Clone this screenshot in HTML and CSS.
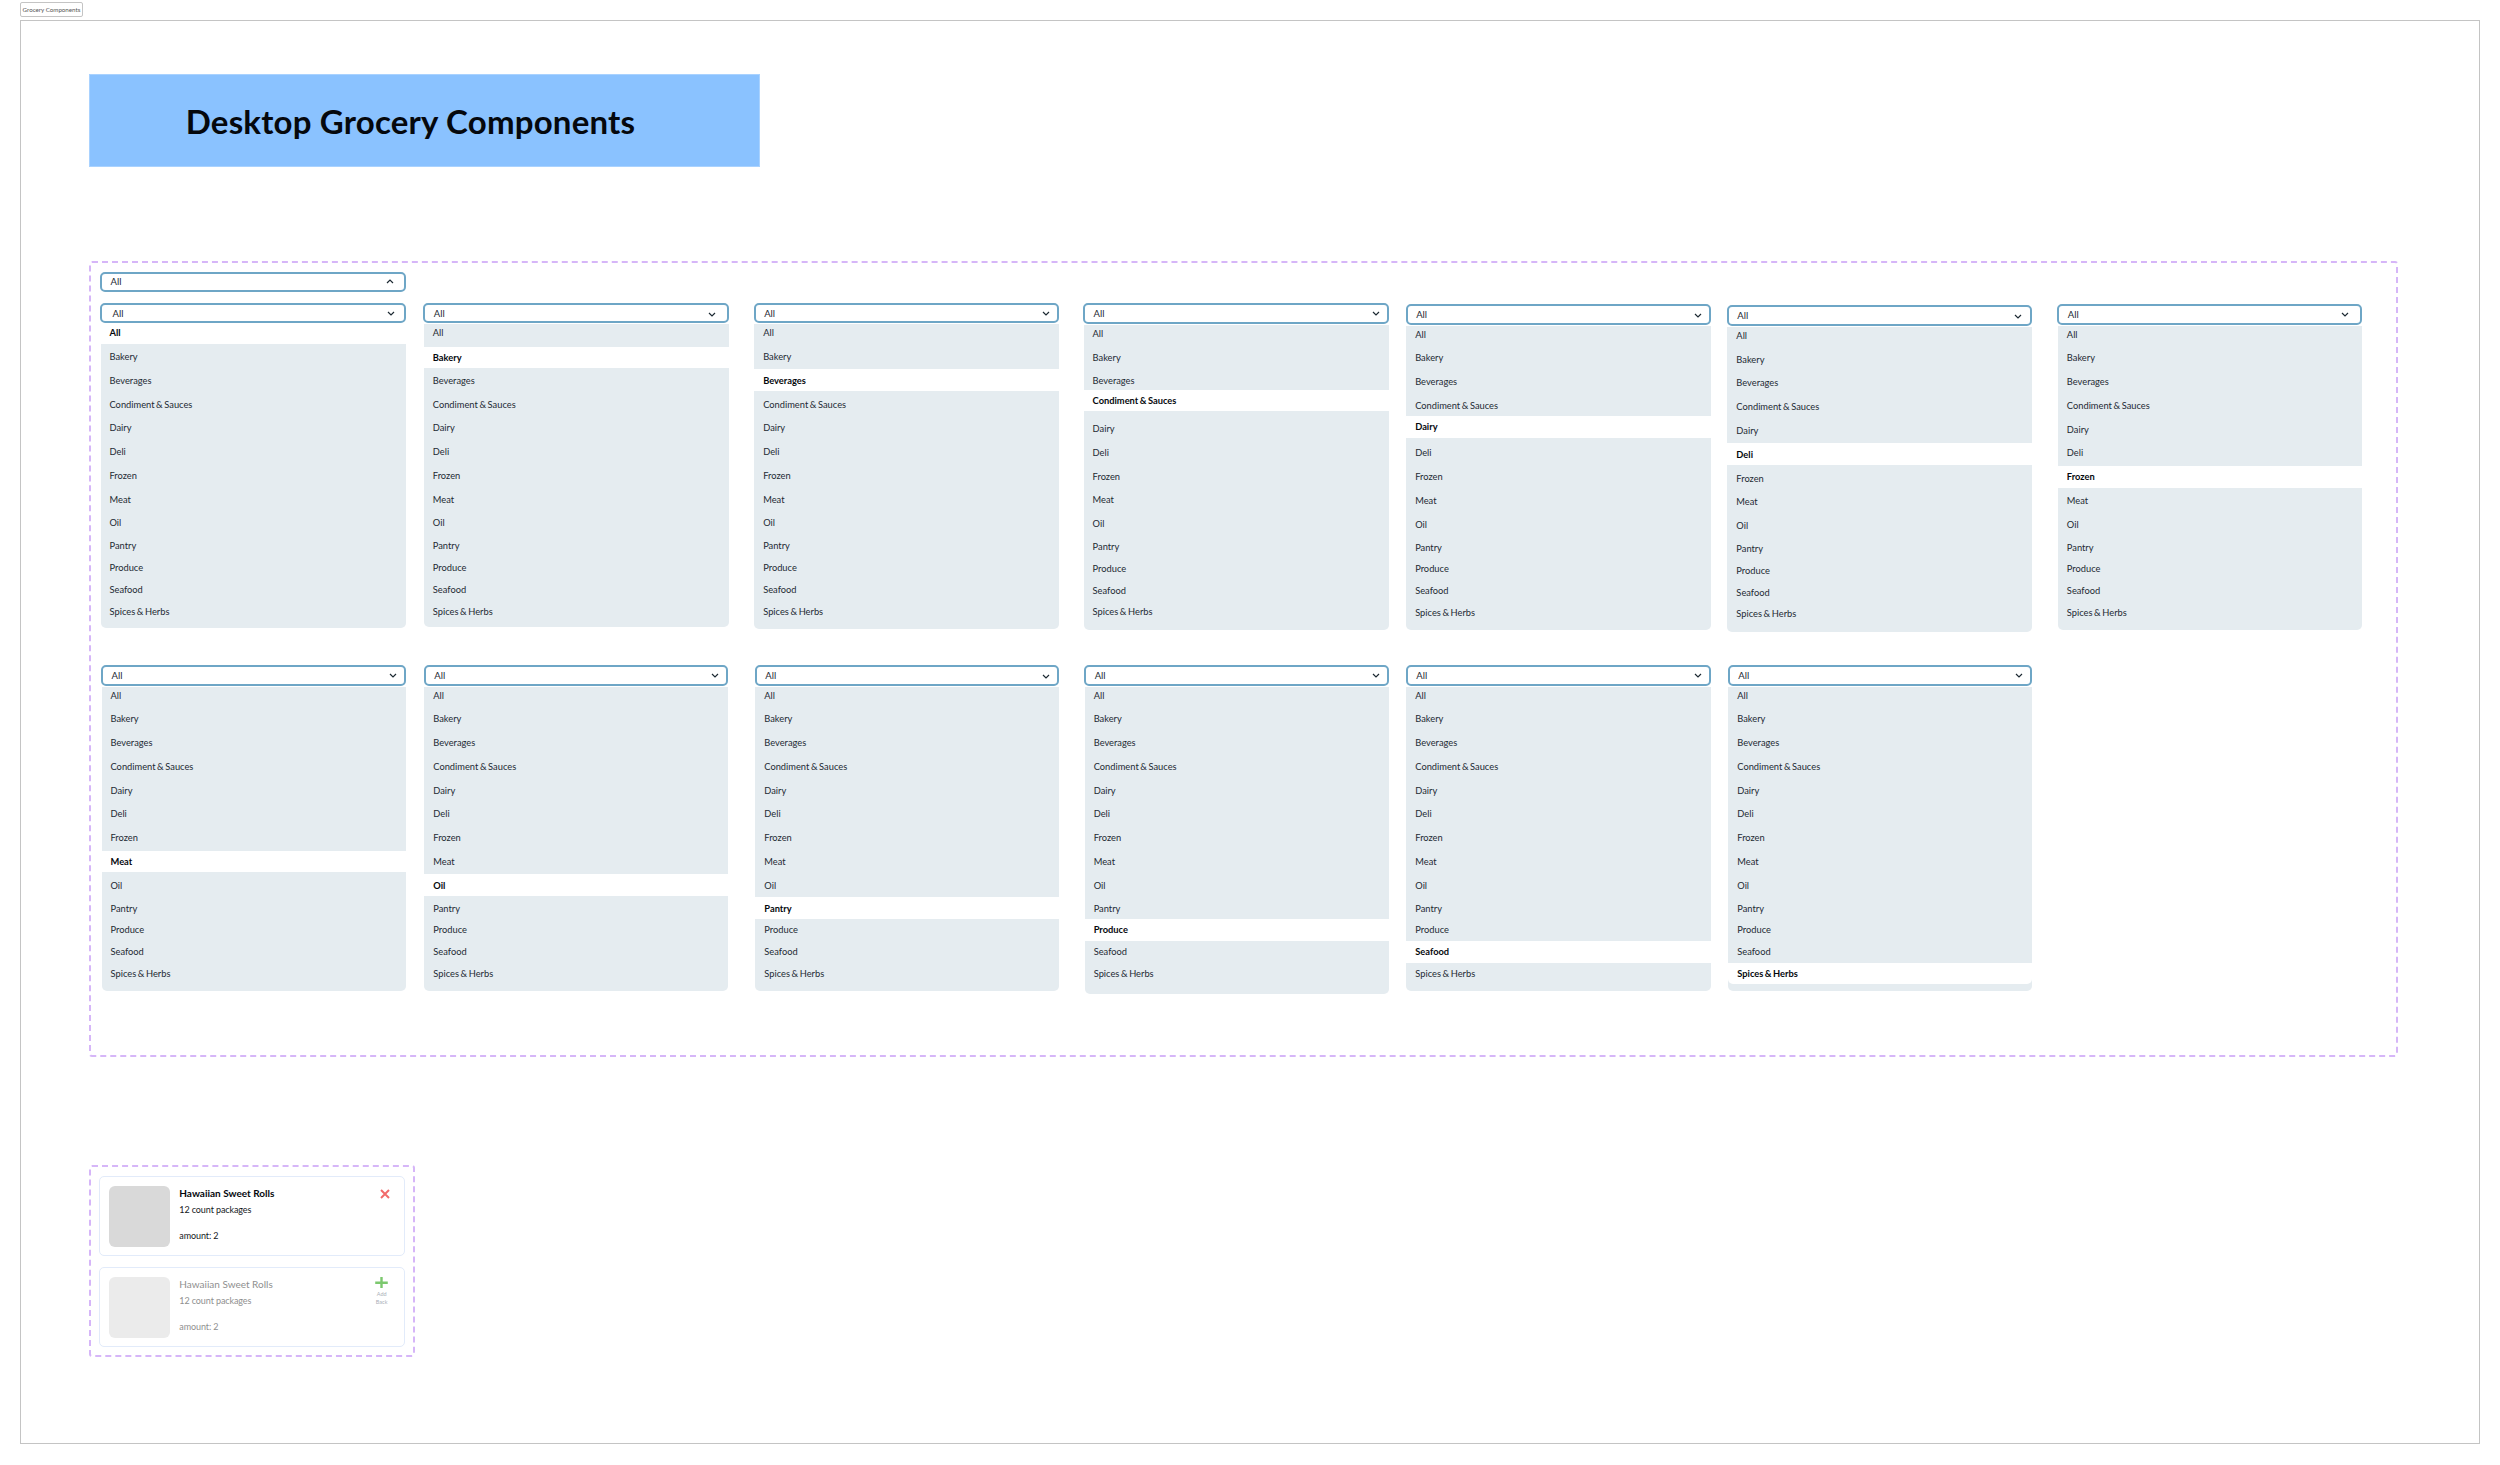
FILE: index.html
```html
<!DOCTYPE html>
<html lang="en">
<head>
  <meta charset="UTF-8" />
  <title>Grocery Components</title>
  <link rel="stylesheet" href="styles.css">
</head>
<body>
  <div class="frame-tab">Grocery Components</div>

  <main class="frame">
    <header class="banner">
      <h1>Desktop Grocery Components</h1>
    </header>

    <section class="group dropdowns">
      <div class="select select-open">
        <span>All</span>
        <svg class="chevron" viewBox="0 0 8 5"><path d="M1 4 L4 1 L7 4" /></svg>
      </div>

      <div class="row row-one">
        <div class="col">
          <div class="select"><span>All</span><svg class="chevron" viewBox="0 0 8 5"><path d="M1 1 L4 4 L7 1" /></svg></div>
          <ul class="list">
            <li class="on">All</li>
            <li>Bakery</li>
            <li>Beverages</li>
            <li>Condiment &amp; Sauces</li>
            <li>Dairy</li>
            <li>Deli</li>
            <li>Frozen</li>
            <li>Meat</li>
            <li>Oil</li>
            <li>Pantry</li>
            <li>Produce</li>
            <li>Seafood</li>
            <li>Spices &amp; Herbs</li>
          </ul>
        </div>
        <div class="col">
          <div class="select"><span>All</span><svg class="chevron" viewBox="0 0 8 5"><path d="M1 1 L4 4 L7 1" /></svg></div>
          <ul class="list">
            <li>All</li>
            <li class="on">Bakery</li>
            <li>Beverages</li>
            <li>Condiment &amp; Sauces</li>
            <li>Dairy</li>
            <li>Deli</li>
            <li>Frozen</li>
            <li>Meat</li>
            <li>Oil</li>
            <li>Pantry</li>
            <li>Produce</li>
            <li>Seafood</li>
            <li>Spices &amp; Herbs</li>
          </ul>
        </div>
        <div class="col">
          <div class="select"><span>All</span><svg class="chevron" viewBox="0 0 8 5"><path d="M1 1 L4 4 L7 1" /></svg></div>
          <ul class="list">
            <li>All</li>
            <li>Bakery</li>
            <li class="on">Beverages</li>
            <li>Condiment &amp; Sauces</li>
            <li>Dairy</li>
            <li>Deli</li>
            <li>Frozen</li>
            <li>Meat</li>
            <li>Oil</li>
            <li>Pantry</li>
            <li>Produce</li>
            <li>Seafood</li>
            <li>Spices &amp; Herbs</li>
          </ul>
        </div>
        <div class="col">
          <div class="select"><span>All</span><svg class="chevron" viewBox="0 0 8 5"><path d="M1 1 L4 4 L7 1" /></svg></div>
          <ul class="list">
            <li>All</li>
            <li>Bakery</li>
            <li>Beverages</li>
            <li class="on">Condiment &amp; Sauces</li>
            <li>Dairy</li>
            <li>Deli</li>
            <li>Frozen</li>
            <li>Meat</li>
            <li>Oil</li>
            <li>Pantry</li>
            <li>Produce</li>
            <li>Seafood</li>
            <li>Spices &amp; Herbs</li>
          </ul>
        </div>
        <div class="col">
          <div class="select"><span>All</span><svg class="chevron" viewBox="0 0 8 5"><path d="M1 1 L4 4 L7 1" /></svg></div>
          <ul class="list">
            <li>All</li>
            <li>Bakery</li>
            <li>Beverages</li>
            <li>Condiment &amp; Sauces</li>
            <li class="on">Dairy</li>
            <li>Deli</li>
            <li>Frozen</li>
            <li>Meat</li>
            <li>Oil</li>
            <li>Pantry</li>
            <li>Produce</li>
            <li>Seafood</li>
            <li>Spices &amp; Herbs</li>
          </ul>
        </div>
        <div class="col">
          <div class="select"><span>All</span><svg class="chevron" viewBox="0 0 8 5"><path d="M1 1 L4 4 L7 1" /></svg></div>
          <ul class="list">
            <li>All</li>
            <li>Bakery</li>
            <li>Beverages</li>
            <li>Condiment &amp; Sauces</li>
            <li>Dairy</li>
            <li class="on">Deli</li>
            <li>Frozen</li>
            <li>Meat</li>
            <li>Oil</li>
            <li>Pantry</li>
            <li>Produce</li>
            <li>Seafood</li>
            <li>Spices &amp; Herbs</li>
          </ul>
        </div>
        <div class="col">
          <div class="select"><span>All</span><svg class="chevron" viewBox="0 0 8 5"><path d="M1 1 L4 4 L7 1" /></svg></div>
          <ul class="list">
            <li>All</li>
            <li>Bakery</li>
            <li>Beverages</li>
            <li>Condiment &amp; Sauces</li>
            <li>Dairy</li>
            <li>Deli</li>
            <li class="on">Frozen</li>
            <li>Meat</li>
            <li>Oil</li>
            <li>Pantry</li>
            <li>Produce</li>
            <li>Seafood</li>
            <li>Spices &amp; Herbs</li>
          </ul>
        </div>
      </div>

      <div class="row row-two">
        <div class="col">
          <div class="select"><span>All</span><svg class="chevron" viewBox="0 0 8 5"><path d="M1 1 L4 4 L7 1" /></svg></div>
          <ul class="list">
            <li>All</li>
            <li>Bakery</li>
            <li>Beverages</li>
            <li>Condiment &amp; Sauces</li>
            <li>Dairy</li>
            <li>Deli</li>
            <li>Frozen</li>
            <li class="on">Meat</li>
            <li>Oil</li>
            <li>Pantry</li>
            <li>Produce</li>
            <li>Seafood</li>
            <li>Spices &amp; Herbs</li>
          </ul>
        </div>
        <div class="col">
          <div class="select"><span>All</span><svg class="chevron" viewBox="0 0 8 5"><path d="M1 1 L4 4 L7 1" /></svg></div>
          <ul class="list">
            <li>All</li>
            <li>Bakery</li>
            <li>Beverages</li>
            <li>Condiment &amp; Sauces</li>
            <li>Dairy</li>
            <li>Deli</li>
            <li>Frozen</li>
            <li>Meat</li>
            <li class="on">Oil</li>
            <li>Pantry</li>
            <li>Produce</li>
            <li>Seafood</li>
            <li>Spices &amp; Herbs</li>
          </ul>
        </div>
        <div class="col">
          <div class="select"><span>All</span><svg class="chevron" viewBox="0 0 8 5"><path d="M1 1 L4 4 L7 1" /></svg></div>
          <ul class="list">
            <li>All</li>
            <li>Bakery</li>
            <li>Beverages</li>
            <li>Condiment &amp; Sauces</li>
            <li>Dairy</li>
            <li>Deli</li>
            <li>Frozen</li>
            <li>Meat</li>
            <li>Oil</li>
            <li class="on">Pantry</li>
            <li>Produce</li>
            <li>Seafood</li>
            <li>Spices &amp; Herbs</li>
          </ul>
        </div>
        <div class="col">
          <div class="select"><span>All</span><svg class="chevron" viewBox="0 0 8 5"><path d="M1 1 L4 4 L7 1" /></svg></div>
          <ul class="list">
            <li>All</li>
            <li>Bakery</li>
            <li>Beverages</li>
            <li>Condiment &amp; Sauces</li>
            <li>Dairy</li>
            <li>Deli</li>
            <li>Frozen</li>
            <li>Meat</li>
            <li>Oil</li>
            <li>Pantry</li>
            <li class="on">Produce</li>
            <li>Seafood</li>
            <li>Spices &amp; Herbs</li>
          </ul>
        </div>
        <div class="col">
          <div class="select"><span>All</span><svg class="chevron" viewBox="0 0 8 5"><path d="M1 1 L4 4 L7 1" /></svg></div>
          <ul class="list">
            <li>All</li>
            <li>Bakery</li>
            <li>Beverages</li>
            <li>Condiment &amp; Sauces</li>
            <li>Dairy</li>
            <li>Deli</li>
            <li>Frozen</li>
            <li>Meat</li>
            <li>Oil</li>
            <li>Pantry</li>
            <li>Produce</li>
            <li class="on">Seafood</li>
            <li>Spices &amp; Herbs</li>
          </ul>
        </div>
        <div class="col">
          <div class="select"><span>All</span><svg class="chevron" viewBox="0 0 8 5"><path d="M1 1 L4 4 L7 1" /></svg></div>
          <ul class="list">
            <li>All</li>
            <li>Bakery</li>
            <li>Beverages</li>
            <li>Condiment &amp; Sauces</li>
            <li>Dairy</li>
            <li>Deli</li>
            <li>Frozen</li>
            <li>Meat</li>
            <li>Oil</li>
            <li>Pantry</li>
            <li>Produce</li>
            <li>Seafood</li>
            <li class="on">Spices &amp; Herbs</li>
          </ul>
        </div>
      </div>
    </section>

    <section class="group cards">
      <article class="card">
        <div class="thumb"></div>
        <div class="card-text">
          <h2>Hawaiian Sweet Rolls</h2>
          <p class="count">12 count packages</p>
          <p class="amount">amount: 2</p>
        </div>
        <button class="remove-btn" aria-label="Remove">
          <svg viewBox="0 0 10 10"><path d="M1 1 L9 9 M9 1 L1 9" /></svg>
        </button>
      </article>

      <article class="card card-removed">
        <div class="thumb"></div>
        <div class="card-text">
          <h2>Hawaiian Sweet Rolls</h2>
          <p class="count">12 count packages</p>
          <p class="amount">amount: 2</p>
        </div>
        <button class="add-btn">
          <svg viewBox="0 0 13 12"><path d="M6.5 0 V12 M0 6 H13" /></svg>
          <span>Add Back</span>
        </button>
      </article>
    </section>
  </main>
</body>
</html>
```

FILE: styles.css
```css
* {
  box-sizing: border-box;
}

body {
  margin: 0;
  padding: 2px 20px 0;
  font-family: "Lato", "Open Sans", sans-serif;
  background: #fff;
  color: #1d2a33;
}

h1, h2, p, ul {
  margin: 0;
  padding: 0;
}

.frame-tab {
  width: 63px;
  height: 15px;
  border: 1px solid #c4c4c4;
  border-radius: 2px;
  font-size: 6.2px;
  line-height: 13px;
  text-align: center;
  color: #555;
  white-space: nowrap;
}

.frame {
  margin-top: 3px;
  height: 1424px;
  border: 1px solid #c4c4c4;
  padding: 53px 0 0 68px;
}

.banner {
  width: 671px;
  height: 93px;
  padding-right: 28px;
  display: flex;
  align-items: center;
  justify-content: center;
  background: #8ac2ff;
  border: 1px solid #a9d2ff;
}

.banner h1 {
  font-size: 33px;
  font-weight: 700;
  letter-spacing: 0.2px;
  color: #05080d;
}

.group {
  border: 2px dashed #d6b6f8;
  border-radius: 3px;
}

.dropdowns {
  margin-top: 94px;
  width: 2309px;
  height: 796px;
  padding: 8.6px 0 0 9px;
}

.select {
  height: 20.5px;
  display: flex;
  align-items: center;
  justify-content: space-between;
  padding: 0 7px 0 8.5px;
  background: #fff;
  border: 2px solid #6ea6c6;
  border-radius: 5px;
  font-size: 9.5px;
}

.select-open {
  width: 305.5px;
  padding-right: 9.5px;
}

.chevron {
  width: 8px;
  height: 5px;
  flex-shrink: 0;
  fill: none;
  stroke: #1d2a33;
  stroke-width: 1.2;
}

.row {
  display: flex;
  align-items: flex-start;
}

.row-one {
  margin-top: 10.7px;
  height: 329px;
}

.row-two {
  margin-top: 33.3px;
}

.col {
  width: 305.5px;
  flex-shrink: 0;
}

.list {
  list-style: none;
  display: flex;
  flex-direction: column;
  margin: 1.2px 0 0 0.5px;
  padding-bottom: 7px;
  background: #e5ecf0;
  border-radius: 0 0 5px 5px;
  font-size: 9.3px;
  word-spacing: -0.8px;
}

.list li {
  height: 21.78px;
  margin-top: 2px;
  padding-left: 9px;
  display: flex;
  align-items: center;
  white-space: pre;
}

.list li:first-child {
  height: 19.25px;
  margin-top: 0;
  padding-bottom: 2.5px;
}

.list li:nth-child(10) {
  margin-top: 1.2px;
}

.list li:nth-child(n+11) {
  margin-top: 0;
}

.list li.on {
  background: #fff;
  font-weight: 700;
  color: #05080d;
}

.list li.on:last-child {
  border-radius: 0 0 5px 5px;
}

/* each frame in the sheet sits a little off the grid */
.row-one .col:nth-child(2) { margin-left: 17.8px; }
.row-one .col:nth-child(3) { margin-left: 24.9px; }
.row-one .col:nth-child(4) { margin-left: 23.9px; margin-top: 0.6px; }
.row-one .col:nth-child(5) { margin-left: 17.1px; margin-top: 1.3px; }
.row-one .col:nth-child(6) { margin-left: 15.7px; margin-top: 2.6px; }
.row-one .col:nth-child(7) { margin-left: 25px; margin-top: 1.3px; width: 304.7px; }

.row-one .col:nth-child(1) .select span { margin-left: 2px; }
.row-one .col:nth-child(1) .list { padding-bottom: 5.8px; }
.row-one .col:nth-child(2) .list { padding-bottom: 4.8px; }
.row-one .col:nth-child(2) .on { margin-top: 3px; margin-bottom: -1px; }
.row-one .col:nth-child(4) .on { margin-top: -2.3px; margin-bottom: 4.3px; }
.row-one .col:nth-child(5) .on { margin-top: -0.5px; margin-bottom: 2.5px; }

/* chevrons don't line up from frame to frame either */
.row-one .col:nth-child(1) .select { padding-right: 9px; }
.row-one .col:nth-child(2) .select { padding-right: 11px; }
.row-one .col:nth-child(3) .select { padding-right: 7.3px; }
.row-one .col:nth-child(4) .select { padding-right: 6.6px; }
.row-one .col:nth-child(5) .select { padding-right: 7.6px; }
.row-one .col:nth-child(6) .select { padding-right: 8px; }
.row-one .col:nth-child(7) .select { padding-right: 10.7px; }
.row-one .col:nth-child(2) .chevron,
.row-one .col:nth-child(5) .chevron,
.row-one .col:nth-child(6) .chevron { margin-top: 2px; }

.row-two .col { width: 304.5px; }
.row-two .col:nth-child(1) { margin-left: 1px; }
.row-two .col:nth-child(2) { margin-left: 18.3px; }
.row-two .col:nth-child(3) { margin-left: 26.5px; }
.row-two .col:nth-child(4) { margin-left: 24.9px; }
.row-two .col:nth-child(5) { margin-left: 17.1px; width: 305.5px; }
.row-two .col:nth-child(6) { margin-left: 16.5px; }
.row-two .col:nth-child(3) .chevron { margin-top: 2px; }
.row-two .col:nth-child(4) .list { padding-bottom: 9.7px; }

/* cards */
.cards {
  margin-top: 108px;
  width: 326px;
  height: 192px;
  padding: 8.5px 8.3px;
  display: flex;
  flex-direction: column;
  gap: 10.5px;
}

.card {
  height: 80.5px;
  display: flex;
  padding: 9px;
  gap: 9px;
  border: 1px solid #e2ebfa;
  border-radius: 5px;
  background: #fff;
}

.thumb {
  width: 61px;
  height: 61px;
  flex-shrink: 0;
  border-radius: 6px;
  background: #d9d9d9;
}

.card-text {
  flex: 1;
}

.card h2 {
  font-size: 10px;
  font-weight: 700;
  line-height: 14.4px;
  color: #05080d;
}

.count {
  margin-top: 1.8px;
  font-size: 9px;
  letter-spacing: -0.1px;
  line-height: 15px;
  color: #14181c;
}

.amount {
  margin-top: 11.5px;
  font-size: 9px;
  letter-spacing: -0.1px;
  line-height: 15px;
  color: #14181c;
}

button {
  padding: 0;
  border: none;
  background: none;
  font-family: inherit;
}

.remove-btn {
  width: 10px;
  height: 10px;
  margin: 3px 5px 0 0;
}

.remove-btn svg {
  display: block;
  width: 10px;
  height: 10px;
  fill: none;
  stroke: #f26a6a;
  stroke-width: 2;
}

.add-btn {
  width: 14px;
  height: 30px;
  margin: 0 6px 0 0;
  display: flex;
  flex-direction: column;
  align-items: center;
  font-size: 5.5px;
  line-height: 7.7px;
  color: #a9afb8;
}

.add-btn svg {
  display: block;
  width: 13px;
  height: 12px;
  margin-bottom: 3px;
  fill: none;
  stroke: #7cc86e;
  stroke-width: 2.5;
}

.card-removed .thumb {
  background: #ebebeb;
}

.card-removed h2,
.card-removed .count,
.card-removed .amount {
  color: #8f8f8f;
  font-weight: 400;
}
```
